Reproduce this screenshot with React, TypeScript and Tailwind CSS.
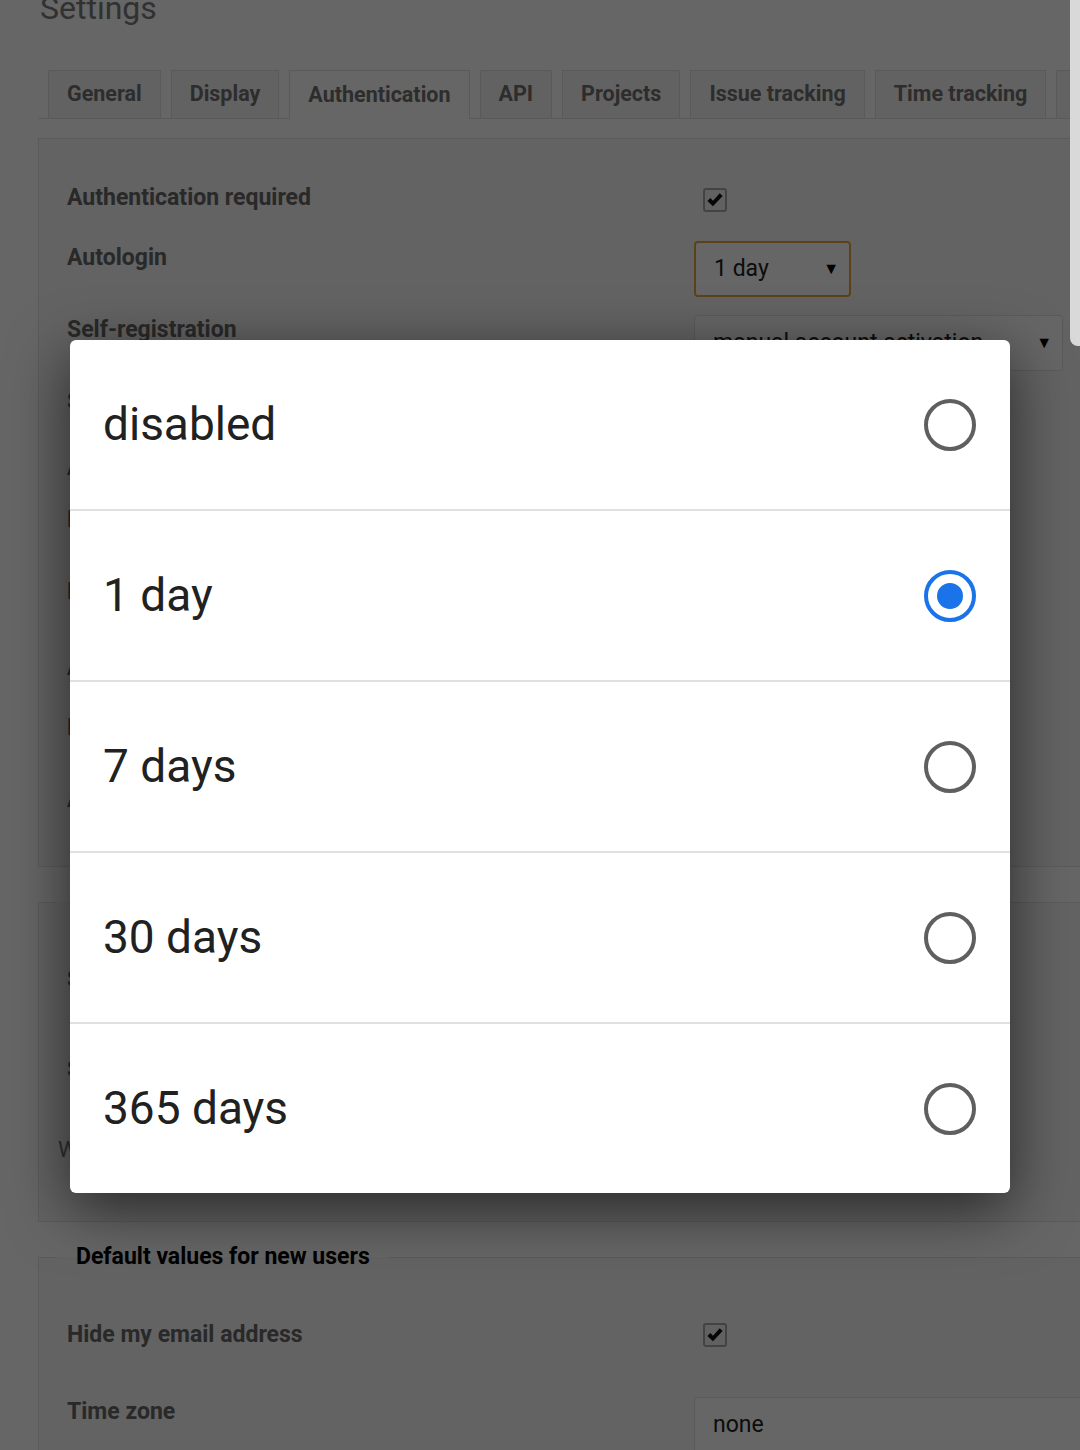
import React from 'react'

const tabs = ['General', 'Display', 'Authentication', 'API', 'Projects', 'Issue tracking', 'Time tracking', 'Files']

const options = ['disabled', '1 day', '7 days', '30 days', '365 days']

function Checkbox() {
  return (
    <div className="w-[24px] h-[24px] rounded-[3px] border-2 border-[#a8a8a8] bg-[#f2f2f2] flex items-center justify-center">
      <svg viewBox="0 0 16 16" className="w-[18px] h-[18px]">
        <path d="M1.2 8.8 L3.9 6.3 L6.2 8.7 L12.2 2 L14.8 4.4 L6.2 13.6 Z" fill="#111" />
      </svg>
    </div>
  )
}

function Select({ value, width, focused }: { value: string; width: string; focused?: boolean }) {
  return (
    <div
      className={`${width} h-[56px] rounded-[4px] flex items-center justify-between pl-[18px] pr-[10px] bg-white ${
        focused ? 'border-2 border-[#e6a83a]' : 'border border-[#e2e2e2]'
      }`}
    >
      <span className="text-[23px] text-[#222]">{value}</span>
      <span className="text-[16px] text-black">▼</span>
    </div>
  )
}

function Row({ label, h, children }: { label: string; h: string; children?: React.ReactNode }) {
  return (
    <div className={`flex items-start ${h}`}>
      <div className="w-[627px] shrink-0 text-[23px] leading-[30px] font-bold text-[#666]">{label}</div>
      <div>{children}</div>
    </div>
  )
}

function Radio({ checked }: { checked?: boolean }) {
  return (
    <div
      className={`w-[52px] h-[52px] rounded-full border-4 flex items-center justify-center ${
        checked ? 'border-[#1a73e8]' : 'border-[#5f5f5f]'
      }`}
    >
      {checked && <div className="w-[26px] h-[26px] rounded-full bg-[#1a73e8]" />}
    </div>
  )
}

export default function App() {
  return (
    <div className="relative w-[1080px] h-[1450px] overflow-hidden bg-white font-['Roboto',sans-serif]">
      {/* page underneath */}
      <div className="w-[1200px] pl-[38px]">
        <h2 className="mt-[-8px] ml-[2px] text-[32px] leading-[32px] text-[#7a7a7a]">Settings</h2>

        {/* Tabs */}
        <div className="mt-[46px] flex gap-[10px] pl-[10px] border-b border-[#e2e2e2]">
          {tabs.map((t) => (
            <div
              key={t}
              className={`h-[48px] px-[18px] flex items-center border border-b-0 border-[#e2e2e2] text-[21.5px] font-bold text-[#707070] ${
                t === 'Authentication' ? 'bg-white mb-[-1px] h-[49px]' : 'bg-[#f6f6f6]'
              }`}
            >
              {t}
            </div>
          ))}
        </div>

        {/* Authentication box */}
        <div className="mt-[19px] border border-[#e4e4e4] bg-[#f7f7f7] pl-[28px] pt-[44px] pb-[21px]">
          <Row label="Authentication required" h="h-[60px]">
            <div className="ml-[9px] mt-[5px]"><Checkbox /></div>
          </Row>
          <Row label="Autologin" h="h-[72px]">
            <div className="mt-[-2px]"><Select value="1 day" width="w-[157px]" focused /></div>
          </Row>
          <Row label="Self-registration" h="h-[72px]">
            <Select value="manual account activation" width="w-[369px]" />
          </Row>
          <Row label="Show custom fields on registration" h="h-[66px]">
            <div className="ml-[9px] mt-[5px]"><Checkbox /></div>
          </Row>
          <Row label="Allow users to delete their own account" h="h-[52px]">
            <div className="ml-[9px] mt-[5px]"><Checkbox /></div>
          </Row>
          <Row label="Minimum password length" h="h-[72px]">
            <div className="w-[120px] h-[52px] border border-[#e2e2e2] bg-white rounded-[4px]" />
          </Row>
          <Row label="Password required character classes" h="h-[76px]">
            <div className="ml-[9px] mt-[5px]"><Checkbox /></div>
          </Row>
          <Row label="Allow password reset via email" h="h-[60px]">
            <div className="ml-[9px] mt-[5px]"><Checkbox /></div>
          </Row>
          <Row label="Maximum number of additional email addresses" h="h-[72px]">
            <div className="w-[120px] h-[52px] border border-[#e2e2e2] bg-white rounded-[4px]" />
          </Row>
          <Row label="Allow OpenID login and registration" h="h-[60px]">
            <div className="ml-[9px] mt-[5px]"><Checkbox /></div>
          </Row>
        </div>

        {/* Session expiration */}
        <fieldset className="mt-[20px] border border-[#e4e4e4] bg-[#f7f7f7] pl-[28px] pt-[48px] pb-[56px]">
          <legend className="ml-[-10px] px-[19px] text-[23px] leading-[30px] font-bold text-black">Session expiration</legend>
          <Row label="Session maximum lifetime" h="h-[90px]" />
          <Row label="Session inactivity timeout" h="h-[80px]" />
          <p className="ml-[-9px] text-[22px] leading-[30px] text-[#777]">Warning: changing these settings may expire the current sessions</p>
        </fieldset>

        {/* Default values for new users */}
        <fieldset className="mt-[20px] border border-[#e4e4e4] bg-[#f7f7f7] pl-[28px] pt-[48px] pb-[40px]">
          <legend className="ml-[-10px] px-[19px] text-[23px] leading-[30px] font-bold text-black">Default values for new users</legend>
          <Row label="Hide my email address" h="h-[77px]">
            <div className="ml-[9px] mt-[3px]"><Checkbox /></div>
          </Row>
          <Row label="Time zone" h="h-[72px]">
            <div className="w-[420px] h-[56px] rounded-[4px] border border-[#e2e2e2] bg-white flex items-center pl-[18px] text-[23px] text-[#222]">
              none
            </div>
          </Row>
        </fieldset>
      </div>

      {/* dim overlay */}
      <div className="absolute inset-0 bg-black/60" />

      {/* scrollbar */}
      <div className="absolute right-0 top-0 w-[10px] h-[346px] bg-[#d9d9d9] rounded-bl-[8px]" />

      {/* option dialog */}
      <div className="absolute left-[70px] top-[340px] w-[940px] bg-white rounded-[6px] shadow-[0_16px_60px_rgba(0,0,0,0.6)] overflow-hidden">
        {options.map((o, i) => (
          <div
            key={o}
            className={`h-[169px] flex items-center justify-between pl-[33px] pr-[34px] ${i > 0 ? 'border-t-2 border-[#e0e0e0] h-[171px]' : ''}`}
          >
            <span className="text-[46px] text-[#212121]">{o}</span>
            <Radio checked={o === '1 day'} />
          </div>
        ))}
      </div>
    </div>
  )
}
